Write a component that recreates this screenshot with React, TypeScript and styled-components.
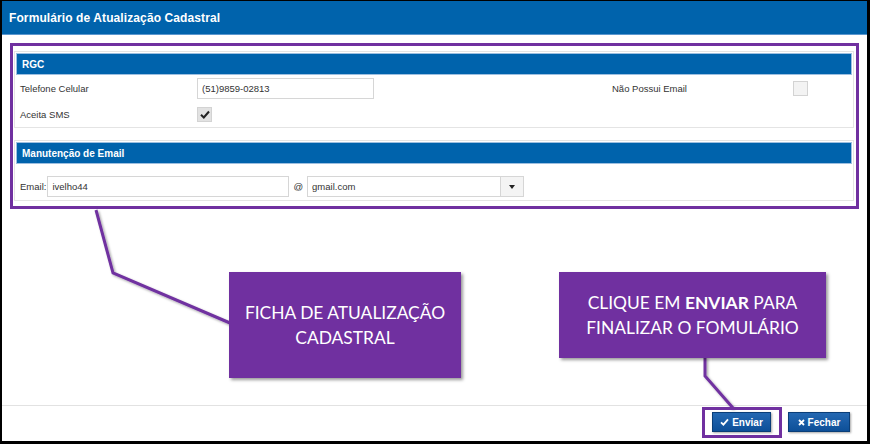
import React from "react";
import styled, { createGlobalStyle } from "styled-components";

const GlobalStyle = createGlobalStyle`
  html, body { margin: 0; padding: 0; background: #ffffff; }
  * { box-sizing: border-box; }
`;

const PURPLE = "#7030a0";
const BLUE = "#0063ac";

const Frame = styled.div`
  position: relative;
  width: 870px;
  height: 444px;
  background: #fff;
  border-style: solid;
  border-color: #000;
  border-width: 1px 3px 3px 2px;
  display: flex;
  flex-direction: column;
  font-family: "Liberation Sans", Arial, sans-serif;
  overflow: hidden;
`;

const TitleBar = styled.div`
  height: 34px;
  background: ${BLUE};
  border-bottom: 1px solid #5b97cf;
  display: flex;
  align-items: center;
  padding-left: 7px;
`;

const Title = styled.h1`
  margin: 0;
  color: #fff;
  font-size: 12px;
  font-weight: bold;
  letter-spacing: 0.1px;
`;

const Body = styled.div`
  flex: 1;
  padding: 8px 8px 0 8px;
`;

const Highlight = styled.div`
  border: 3px solid ${PURPLE};
  padding: 5px 2px 5px 1px;
  display: flex;
  flex-direction: column;
  gap: 12px;
`;

const Panel = styled.section`
  border: 1px solid #e4e4e4;
  padding: 1px 1px 0 1px;
`;

const PanelHeader = styled.div`
  height: 22px;
  background: ${BLUE};
  border: 1px solid #9dbfe0;
  color: #fff;
  font-size: 10px;
  font-weight: bold;
  display: flex;
  align-items: center;
  padding-left: 5px;
`;

const RgcBody = styled.div`
  display: grid;
  grid-template-columns: 177px 177px 238px 181px 15px;
  grid-auto-rows: 26px;
  align-items: center;
  padding: 0 0 0 4px;
`;

const Label = styled.span`
  font-size: 9.5px;
  color: #333;
`;

const EmailLabel = styled(Label)`
  margin-right: 1px;
`;

const TextInput = styled.div<{ $w?: number }>`
  height: 21px;
  width: ${(p) => (p.$w ? `${p.$w}px` : "100%")};
  border: 1px solid #d6d6d6;
  background: #fff;
  font-size: 9.5px;
  color: #333;
  display: flex;
  align-items: center;
  padding-left: 4px;
`;

const Check = styled.div<{ $checked?: boolean }>`
  width: 15px;
  height: 15px;
  border: 1px solid #d3d3d3;
  background: ${(p) => (p.$checked ? "#e2e2e2" : "#f3f3f3")};
  display: flex;
  align-items: center;
  justify-content: center;
`;

const EmailBody = styled.div`
  display: flex;
  align-items: center;
  padding: 12px 0 3px 4px;
`;

const AtSign = styled.span`
  font-size: 9.5px;
  color: #333;
  margin: 0 4px 0 4px;
`;

const Select = styled.div`
  width: 217px;
  height: 21px;
  border: 1px solid #d6d6d6;
  display: flex;
  font-size: 9.5px;
  color: #333;
`;

const SelectValue = styled.div`
  flex: 1;
  display: flex;
  align-items: center;
  padding-left: 4px;
`;

const SelectArrow = styled.div`
  width: 23px;
  border-left: 1px solid #d6d6d6;
  background: #f4f4f4;
  display: flex;
  align-items: center;
  justify-content: center;
`;

const Footer = styled.div`
  height: 36px;
  border-top: 1px solid #e2e2e2;
  display: flex;
  justify-content: flex-end;
  align-items: flex-start;
  padding: 6px 17px 0 0;
  gap: 17px;
`;

const Button = styled.button<{ $w: number }>`
  width: ${(p) => p.$w}px;
  height: 20px;
  border: 1px solid #0a3e78;
  background: linear-gradient(#2468b2, #0d4f98);
  color: #fff;
  font-family: "Liberation Sans", Arial, sans-serif;
  font-size: 10px;
  font-weight: bold;
  display: flex;
  align-items: center;
  justify-content: center;
  gap: 3px;
  padding: 0;
  box-shadow: 1px 1px 2px rgba(0, 0, 0, 0.35);
`;

const Callout = styled.div<{ $x: number; $y: number; $w: number; $h: number }>`
  position: absolute;
  left: ${(p) => p.$x}px;
  top: ${(p) => p.$y}px;
  width: ${(p) => p.$w}px;
  height: ${(p) => p.$h}px;
  background: ${PURPLE};
  color: #fff;
  font-family: Lato, "Open Sans", sans-serif;
  font-size: 17.4px;
  line-height: 25px;
  text-align: center;
  display: flex;
  flex-direction: column;
  align-items: center;
  justify-content: center;
  box-shadow: 2px 2px 3px rgba(0, 0, 0, 0.4);
`;

const Annotations = styled.svg`
  position: absolute;
  left: -2px;
  top: -1px;
  width: 870px;
  height: 444px;
  pointer-events: none;
`;

const CheckMark = () => (
  <svg width="10" height="9" viewBox="0 0 10 9">
    <path d="M1 4.8 L3.8 7.5 L9 1.5" fill="none" stroke="#222" strokeWidth="2" />
  </svg>
);

export default function App() {
  return (
    <>
      <GlobalStyle />
      <Frame>
        <TitleBar>
          <Title>Formulário de Atualização Cadastral</Title>
        </TitleBar>
        <Body>
          <Highlight>
            <Panel>
              <PanelHeader>RGC</PanelHeader>
              <RgcBody>
                <Label>Telefone Celular</Label>
                <TextInput>(51)9859-02813</TextInput>
                <span />
                <Label>Não Possui Email</Label>
                <Check />
                <Label>Aceita SMS</Label>
                <Check $checked>
                  <CheckMark />
                </Check>
              </RgcBody>
            </Panel>
            <Panel>
              <PanelHeader>Manutenção de Email</PanelHeader>
              <EmailBody>
                <EmailLabel>Email:</EmailLabel>
                <TextInput $w={242}>ivelho44</TextInput>
                <AtSign>@</AtSign>
                <Select>
                  <SelectValue>gmail.com</SelectValue>
                  <SelectArrow>
                    <svg width="6" height="4" viewBox="0 0 6 4">
                      <path d="M0 0 H6 L3 4 Z" fill="#222" />
                    </svg>
                  </SelectArrow>
                </Select>
              </EmailBody>
            </Panel>
          </Highlight>
        </Body>
        <Footer>
          <Button $w={59}>
            <svg width="9" height="8" viewBox="0 0 9 8">
              <path d="M1 4.3 L3.4 6.6 L8 1.4" fill="none" stroke="#fff" strokeWidth="1.8" />
            </svg>
            Enviar
          </Button>
          <Button $w={62}>
            <svg width="7" height="7" viewBox="0 0 7 7">
              <path d="M1 1 L6 6 M6 1 L1 6" fill="none" stroke="#fff" strokeWidth="1.8" />
            </svg>
            Fechar
          </Button>
        </Footer>

        <Annotations viewBox="0 0 870 444">
          <defs>
            <filter id="sh" x="-20%" y="-20%" width="140%" height="140%">
              <feDropShadow dx="1.5" dy="1.5" stdDeviation="1" floodColor="#000" floodOpacity="0.35" />
            </filter>
          </defs>
          <polyline
            points="96,210 113,273 230,323"
            fill="none"
            stroke={PURPLE}
            strokeWidth="3"
            filter="url(#sh)"
          />
          <polyline
            points="705,357 705,376 733,408"
            fill="none"
            stroke={PURPLE}
            strokeWidth="3"
            filter="url(#sh)"
          />
          <rect x="703.5" y="408.5" width="77" height="28" fill="none" stroke={PURPLE} strokeWidth="3" />
        </Annotations>

        <Callout $x={227} $y={271} $w={232} $h={106}>
          <span>FICHA DE ATUALIZAÇÃO</span>
          <span>CADASTRAL</span>
        </Callout>
        <Callout $x={557} $y={271} $w={267} $h={86}>
          <span>
            CLIQUE EM <b>ENVIAR</b> PARA
          </span>
          <span>FINALIZAR O FOMULÁRIO</span>
        </Callout>
      </Frame>
    </>
  );
}
